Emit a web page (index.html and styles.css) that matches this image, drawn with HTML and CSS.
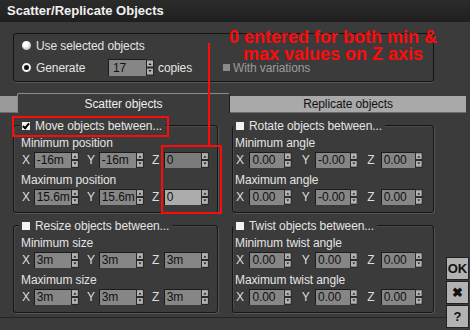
FILE: index.html
```html
<!DOCTYPE html>
<html>
  <head>
    <title>Scatter/Replicate Objects</title>
    <meta charset="UTF-8">
    <link rel="stylesheet" href="styles.css">
  </head>
  <body>
    <svg class="defs" width="0" height="0">
      <symbol id="spin" viewBox="0 0 8 16">
        <rect width="8" height="16" fill="#262626"/>
        <rect x="1" y="1" width="6" height="6" fill="#b2b2b2"/>
        <rect x="1" y="9" width="6" height="6" fill="#b2b2b2"/>
        <path d="M2.5 5.5h3L4 3.5z M2.5 10.5h3L4 12.5z" fill="#111"/>
      </symbol>
    </svg>
    <div class="titlebar">Scatter/Replicate Objects</div>
    <div class="source">
      <p class="opt"><span class="radio"></span>Use selected objects</p>
      <p class="opt"><span class="radio on"></span><span class="gen">Generate</span><span class="field count">17</span><svg class="sp tall"><use href="#spin"/></svg><span class="copies">copies</span><span class="check dis"></span><span class="dim">With variations</span></p>
    </div>
    <div class="tabs">
      <div class="tab stub"></div>
      <div class="tab active">Scatter objects</div>
      <div class="tab">Replicate objects</div>
    </div>
    <div class="panel">
      <div class="groups">
        <div class="group wide">
          <p class="legend"><span class="check on"></span>Move objects between...</p>
          <p class="label">Minimum position</p>
          <div class="row">
            <span class="axis">X</span><span class="field">-16m</span><svg class="sp"><use href="#spin"/></svg>
            <span class="axis">Y</span><span class="field">-16m</span><svg class="sp"><use href="#spin"/></svg>
            <span class="axis">Z</span><span class="field dark">0</span><svg class="sp"><use href="#spin"/></svg>
          </div>
          <p class="label">Maximum position</p>
          <div class="row">
            <span class="axis">X</span><span class="field">15.6m</span><svg class="sp"><use href="#spin"/></svg>
            <span class="axis">Y</span><span class="field">15.6m</span><svg class="sp"><use href="#spin"/></svg>
            <span class="axis">Z</span><span class="field light">0</span><svg class="sp"><use href="#spin"/></svg>
          </div>
        </div>
        <div class="group narrow">
          <p class="legend"><span class="check"></span>Rotate objects between...</p>
          <p class="label">Minimum angle</p>
          <div class="row">
            <span class="axis">X</span><span class="field">0.00</span><svg class="sp"><use href="#spin"/></svg>
            <span class="axis">Y</span><span class="field">-0.00</span><svg class="sp"><use href="#spin"/></svg>
            <span class="axis">Z</span><span class="field">0.00</span><svg class="sp"><use href="#spin"/></svg>
          </div>
          <p class="label">Maximum angle</p>
          <div class="row">
            <span class="axis">X</span><span class="field">0.00</span><svg class="sp"><use href="#spin"/></svg>
            <span class="axis">Y</span><span class="field">-0.00</span><svg class="sp"><use href="#spin"/></svg>
            <span class="axis">Z</span><span class="field">0.00</span><svg class="sp"><use href="#spin"/></svg>
          </div>
        </div>
        <div class="group wide">
          <p class="legend"><span class="check"></span>Resize objects between...</p>
          <p class="label">Minimum size</p>
          <div class="row">
            <span class="axis">X</span><span class="field">3m</span><svg class="sp"><use href="#spin"/></svg>
            <span class="axis">Y</span><span class="field">3m</span><svg class="sp"><use href="#spin"/></svg>
            <span class="axis">Z</span><span class="field">3m</span><svg class="sp"><use href="#spin"/></svg>
          </div>
          <p class="label">Maximum size</p>
          <div class="row">
            <span class="axis">X</span><span class="field">3m</span><svg class="sp"><use href="#spin"/></svg>
            <span class="axis">Y</span><span class="field">3m</span><svg class="sp"><use href="#spin"/></svg>
            <span class="axis">Z</span><span class="field">3m</span><svg class="sp"><use href="#spin"/></svg>
          </div>
        </div>
        <div class="group narrow">
          <p class="legend"><span class="check"></span>Twist objects between...</p>
          <p class="label">Minimum twist angle</p>
          <div class="row">
            <span class="axis">X</span><span class="field">0.00</span><svg class="sp"><use href="#spin"/></svg>
            <span class="axis">Y</span><span class="field">0.00</span><svg class="sp"><use href="#spin"/></svg>
            <span class="axis">Z</span><span class="field">0.00</span><svg class="sp"><use href="#spin"/></svg>
          </div>
          <p class="label">Maximum twist angle</p>
          <div class="row">
            <span class="axis">X</span><span class="field">0.00</span><svg class="sp"><use href="#spin"/></svg>
            <span class="axis">Y</span><span class="field">0.00</span><svg class="sp"><use href="#spin"/></svg>
            <span class="axis">Z</span><span class="field">0.00</span><svg class="sp"><use href="#spin"/></svg>
          </div>
        </div>
      </div>
      <div class="buttons">
        <button class="btn">OK</button>
        <button class="btn">&#x2716;</button>
        <button class="btn">?</button>
      </div>
    </div>
    <div class="note">0 entered for both min &amp;<br>max values on Z axis</div>
    <div class="note-line"></div>
    <div class="note-box move"></div>
    <div class="note-box zed"></div>
  </body>
</html>
```

FILE: styles.css
```css
html, body {
  margin: 0;
}
body {
  width: 470px;
  height: 330px;
  overflow: hidden;
  position: relative;
  background-color: #3b3b3b;
  color: #e4e4e4;
  font-family: 'Liberation Sans', sans-serif;
  font-size: 12px;
  letter-spacing: -0.1px;
  line-height: 1;
}
p {
  margin: 0;
}
.defs {
  position: absolute;
}
.titlebar {
  height: 22px;
  line-height: 22px;
  padding-left: 7px;
  background: linear-gradient(#2b2b2b, #1f1f1f);
  font-weight: bold;
  font-size: 13px;
  letter-spacing: 0;
  color: #f0f0f0;
}
.source {
  box-sizing: border-box;
  margin: 11px 0 0 13px;
  width: 421px;
  height: 49px;
  padding: 3px 0 0 8px;
  border: 1px solid #141414;
  border-radius: 3px;
  box-shadow: 0 1px 0 #555;
}
.opt {
  display: flex;
  align-items: center;
  height: 17px;
}
.opt + .opt {
  margin-top: 5px;
}
.radio {
  width: 9px;
  height: 9px;
  margin-right: 5px;
  border-radius: 50%;
  background: radial-gradient(circle at 40% 35%, #fff 30%, #9a9a9a 100%);
}
.radio.on {
  box-sizing: border-box;
  background: #111;
  border: 2px solid #f4f4f4;
}
.gen {
  width: 72px;
}
.field {
  box-sizing: border-box;
  width: 38px;
  height: 16px;
  line-height: 15px;
  padding-left: 2px;
  overflow: hidden;
  white-space: nowrap;
  background-color: #868686;
  border-top: 1px solid #1c1c1c;
  border-left: 1px solid #1c1c1c;
  color: #111;
}
.field.count {
  height: 17px;
  line-height: 16px;
  padding-left: 4px;
}
.field.dark {
  background-color: #7a7a7a;
}
.field.light {
  background-color: #acacac;
}
.sp {
  width: 8px;
  height: 16px;
}
.sp.tall {
  height: 17px;
}
.copies {
  width: 65px;
  margin-left: 4px;
}
.check {
  width: 8px;
  height: 8px;
  margin-right: 5px;
  background-color: #f2f2f2;
  position: relative;
}
.check.on::after {
  content: '';
  position: absolute;
  left: 2px;
  top: 0;
  width: 2px;
  height: 5px;
  border-right: 2px solid #000;
  border-bottom: 2px solid #000;
  transform: rotate(40deg);
}
.check.dis {
  width: 7px;
  height: 7px;
  margin-right: 3px;
  background-color: #8a8a8a;
}
.dim {
  color: #9c9c9c;
}
.tabs {
  display: flex;
  align-items: flex-end;
  height: 20px;
  margin-top: 11px;
}
.tab {
  box-sizing: border-box;
  width: 236px;
  height: 17px;
  line-height: 16px;
  text-align: center;
  background-color: #a9a9a9;
  color: #111;
  border-bottom: 1px solid #6c6c6c;
}
.tab.stub {
  width: 17px;
  background-color: #9a9a9a;
}
.tab.active {
  width: 213px;
  height: 20px;
  line-height: 20px;
  background-color: #3b3b3b;
  color: #eee;
  border: 1px solid #8c8c8c;
  border-right-color: #1c1c1c;
  border-bottom: none;
  border-radius: 2px 2px 0 0;
}
.panel {
  box-sizing: border-box;
  display: flex;
  width: 470px;
  height: 205px;
  padding: 12px 0 4px 13px;
  border-bottom: 1px solid #242424;
}
.groups {
  display: grid;
  grid-template-columns: 205px 202px;
  column-gap: 14px;
  row-gap: 12px;
  align-content: start;
}
.group {
  box-sizing: border-box;
  height: 88px;
  padding: 0 0 7px 8px;
  border: 1px solid #161616;
  border-radius: 3px;
  box-shadow: 1px 1px 0 #555, inset 1px 1px 0 #4a4a4a;
}
.group.narrow {
  padding-left: 3px;
}
.legend {
  display: flex;
  align-items: center;
  width: fit-content;
  height: 15px;
  margin: -8px 0 0 -3px;
  padding: 0 3px;
  background-color: #3b3b3b;
}
.label {
  height: 14px;
  line-height: 14px;
  margin: 3px 0 2px -1px;
}
.row + .label {
  margin-top: 5px;
}
.row {
  display: flex;
  align-items: center;
  height: 16px;
}
.axis {
  width: 12px;
  color: #ddd;
}
.row .sp {
  margin-right: 8px;
}
.narrow .axis {
  width: 14px;
}
.narrow .field {
  width: 36px;
}
.narrow .row .sp {
  margin-right: 10px;
}
.buttons {
  display: flex;
  flex-direction: column;
  gap: 1px;
  align-self: flex-end;
  margin: 0 0 -15px 12px;
}
.btn {
  width: 23px;
  height: 23px;
  padding: 0;
  border: 1px solid #222;
  background-color: #b2b2b2;
  color: #111;
  font-family: 'Liberation Sans', sans-serif;
  font-weight: bold;
  font-size: 13px;
}
.note {
  position: absolute;
  left: 219px;
  top: 29px;
  width: 228px;
  text-align: center;
  color: #ff0a0a;
  font-weight: bold;
  font-size: 18px;
  letter-spacing: 0;
  line-height: 17px;
}
.note-line {
  position: absolute;
  left: 208px;
  top: 43px;
  width: 2px;
  height: 102px;
  background-color: #ff0a0a;
}
.note-box {
  position: absolute;
  box-sizing: border-box;
  border: 2px solid #ff0a0a;
}
.note-box.move {
  left: 12px;
  top: 116px;
  width: 157px;
  height: 21px;
}
.note-box.zed {
  left: 161px;
  top: 145px;
  width: 61px;
  height: 69px;
}
```
